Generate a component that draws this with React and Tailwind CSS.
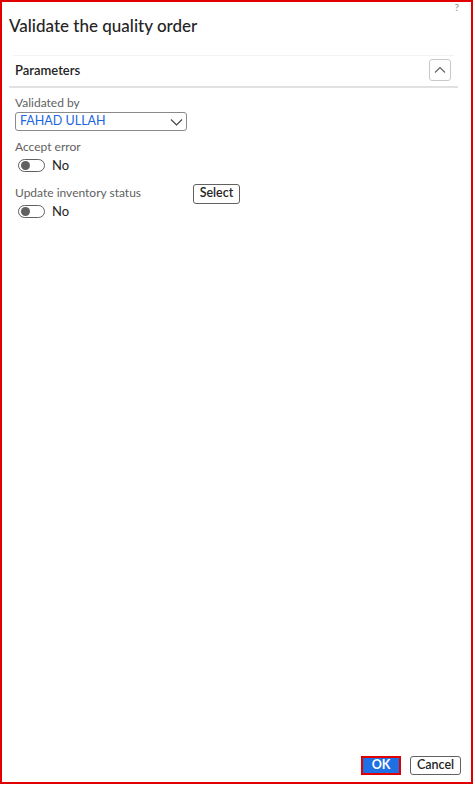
import React from "react";

function Toggle() {
  return (
    <div className="flex items-center gap-[7px]">
      <span className="flex h-[13px] w-[27px] items-center rounded-full border border-[#616161] bg-white px-[2px]">
        <span className="h-[9px] w-[9px] rounded-full bg-[#616161]" />
      </span>
      <span className="text-[13px] text-[#242424]">No</span>
    </div>
  );
}

export default function App() {
  return (
    <div className="h-[785px] w-[475px] bg-white font-['Lato',sans-serif]">
      <div className="relative flex h-[784px] w-[473px] flex-col border-2 border-[#e00000] bg-white">
        <span className="absolute right-[12px] top-0 text-[10px] leading-[10px] text-[#8a8a8a]">?</span>

        <h1 className="ml-[7px] mt-[14px] text-[17px] font-medium leading-[20px] text-[#242424]">
          Validate the quality order
        </h1>

        <div className="ml-[11px] mr-[17px] mt-[19px] border-t border-[#f3f3f3]" />

        <div className="ml-[7px] mr-[13px] flex h-[32px] items-center justify-between border-b-2 border-[#e1e1e1] pl-[6px] pr-[7px]">
          <span className="text-[13px] font-semibold text-[#242424]">Parameters</span>
          <button className="mb-[2px] flex h-[22px] w-[22px] items-center justify-center rounded-[3px] border border-[#c8c8c8] bg-white">
            <svg width="12" height="8" viewBox="0 0 12 8" fill="none">
              <path d="M1 6.5 L6 1.5 L11 6.5" stroke="#616161" strokeWidth="1.1" />
            </svg>
          </button>
        </div>

        <div className="ml-[13px] mt-[8px] flex flex-col">
          <span className="text-[12px] leading-[14px] text-[#616161]">Validated by</span>
          <div className="mt-[2px] flex h-[19px] w-[172px] items-center justify-between rounded-[3px] border border-[#8a8a8a] pl-[4px] pr-[3px]">
            <span className="text-[12.5px] text-[#1a66e0]">FAHAD ULLAH</span>
            <svg width="13" height="8" viewBox="0 0 13 8" fill="none">
              <path d="M1 1.5 L6.5 7 L12 1.5" stroke="#424242" strokeWidth="1.1" />
            </svg>
          </div>

          <span className="mt-[9px] text-[12px] leading-[14px] text-[#616161]">Accept error</span>
          <div className="mt-[2px] ml-[3px]">
            <Toggle />
          </div>

          <div className="mt-[2px] flex items-start">
            <div className="flex w-[178px] flex-col">
              <span className="mt-[8px] text-[12px] leading-[14px] text-[#616161]">
                Update inventory status
              </span>
              <div className="mt-[2px] ml-[3px]">
                <Toggle />
              </div>
            </div>
            <button className="mt-[6px] flex h-[20px] w-[47px] items-center justify-center rounded-[3px] border border-[#616161] bg-white text-[12.5px] font-semibold text-[#242424]">
              Select
            </button>
          </div>
        </div>

        <div className="mt-auto mb-[7px] mr-[10px] flex justify-end gap-[9px]">
          <button className="flex h-[19px] w-[40px] items-center justify-center border-2 border-[#e00000] bg-[#1f6fe5] text-[12.5px] font-bold text-white">
            OK
          </button>
          <button className="flex h-[19px] w-[51px] items-center justify-center rounded-[3px] border border-[#616161] bg-white text-[12.5px] font-semibold text-[#242424]">
            Cancel
          </button>
        </div>
      </div>
    </div>
  );
}
